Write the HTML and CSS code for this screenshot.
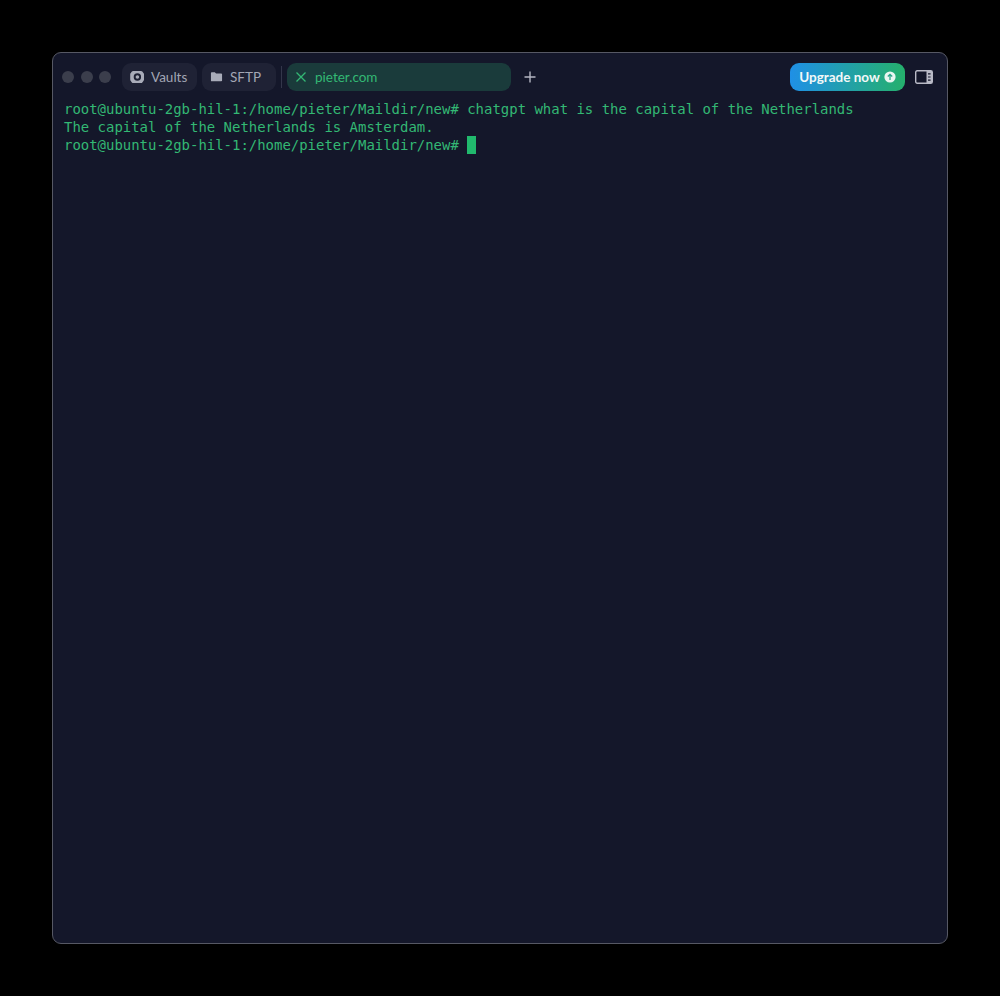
FILE: index.html
```html
<!DOCTYPE html>
<html lang="en">
<head>
<meta charset="utf-8">
<title>Termius</title>
<link rel="stylesheet" href="styles.css">
</head>
<body>
<main class="window">
  <header class="toolbar">
    <div class="lights"><span class="light"></span><span class="light"></span><span class="light"></span></div>
    <div class="tab tab-vaults">
      <svg class="icon" viewBox="0 0 14 14" width="14" height="14"><path fill="#a9acb9" fill-rule="evenodd" d="M3.2 1h7.8c.6 0 1 .2 1.3.6l1.1 1.5c.4.4.6.8.6 1.3v5.2c0 .5-.2.9-.6 1.3l-1.1 1.5c-.3.4-.7.6-1.3.6H3.2c-.6 0-1-.2-1.3-.6L.8 10.900c-.4-.4-.6-.8-.6-1.300V4.400c0-.5.2-.9.6-1.300l1.100-1.500C2.200 1.200 2.600 1 3.200 1zM7.400 3.300a3.700 3.700 0 1 0 0 7.400 3.700 3.700 0 0 0 0-7.400zM7.400 5.200a1.800 1.800 0 1 1 0 3.600 1.800 1.800 0 0 1 0-3.600z"/></svg>
      <span>Vaults</span>
    </div>
    <div class="tab tab-sftp">
      <svg class="icon" viewBox="0 0 14 14" width="13" height="13"><path fill="#a9acb9" d="M1 3.200c0-.5.4-.9.9-.9h3.300l1.300 1.400h5.600c.5 0 .9.4.9.9v6.600c0 .5-.4.9-.9.9H1.900a.9.9 0 0 1-.9-.9z"/></svg>
      <span>SFTP</span>
    </div>
    <div class="divider"></div>
    <div class="tab tab-active">
      <svg class="close" viewBox="0 0 12 12" width="12" height="12"><path d="M1.500 1.500l9 9M10.500 1.500l-9 9" stroke="#33b874" stroke-width="1.300" fill="none"/></svg>
      <span>pieter.com</span>
    </div>
    <svg class="plus" viewBox="0 0 12 12" width="12" height="12"><path d="M6 .5v11M.5 6h11" stroke="#b4b6c2" stroke-width="1.400" fill="none"/></svg>
    <div class="upgrade">
      <span>Upgrade now</span>
      <svg viewBox="0 0 12 12" width="12" height="12"><circle cx="6" cy="6" r="5.600" fill="#e9f6f1"/><path d="M6 9V3.400M3.800 5.500L6 3.300l2.200 2.200" stroke="#2aa58a" stroke-width="1.300" fill="none"/></svg>
    </div>
    <svg class="sidebar" viewBox="0 0 18 14" width="18" height="14"><rect x=".7" y=".7" width="16.600" height="12.600" rx="1.500" fill="none" stroke="#b9bac6" stroke-width="1.400"/><path d="M11.500 1h5.500v12h-5.500z" fill="#b9bac6"/><path d="M13 3.800h2.600M13 7h2.600M13 10.200h2.600" stroke="#14172a" stroke-width="1.200"/></svg>
  </header>
  <pre class="terminal">root@ubuntu-2gb-hil-1:/home/pieter/Maildir/new# chatgpt what is the capital of the Netherlands
The capital of the Netherlands is Amsterdam.
root@ubuntu-2gb-hil-1:/home/pieter/Maildir/new# <span class="cursor"></span></pre>
</main>
</body>
</html>
```
FILE: styles.css
```css
* { box-sizing: border-box; }
html, body { margin: 0; height: 100%; }
body {
  background: #000;
  padding: 52px;
  font-family: "Lato", "Liberation Sans", sans-serif;
}
.window {
  width: 896px;
  height: 892px;
  background: #14172a;
  border: 1px solid #565864;
  border-radius: 9px;
  overflow: hidden;
}
.toolbar {
  display: flex;
  align-items: center;
  height: 47px;
  padding: 10px 14px 10px 9px;
}
.lights { display: flex; gap: 6.5px; margin-right: 11px; }
.light {
  width: 12px;
  height: 12px;
  border-radius: 50%;
  background: #3b3e4c;
}
.tab {
  height: 28px;
  border-radius: 9px;
  display: flex;
  align-items: center;
  background: #1f2235;
  color: #a3a6b4;
  font-size: 13.5px;
}
.tab-vaults { width: 75px; padding-left: 8px; gap: 7px; margin-right: 5px; }
.tab-sftp { width: 74px; padding-left: 8px; gap: 7px; }
.divider { width: 1px; height: 22px; background: #33364a; margin: 0 5px; }
.tab-active {
  width: 224px;
  padding-left: 8px;
  gap: 8px;
  background: #1a3b3b;
  color: #33b874;
}
.plus { margin-left: 13px; }
.upgrade {
  margin-left: auto;
  width: 115px;
  height: 28px;
  border-radius: 9px;
  background: linear-gradient(90deg, #1f90e6, #25b06c);
  color: #f2f8f8;
  font-size: 13.5px;
  font-weight: 700;
  display: flex;
  align-items: center;
  justify-content: center;
  gap: 4px;
}
.sidebar { margin-left: 10px; }
.terminal {
  margin: 0;
  padding: 0 0 0 11px;
  color: #33b874;
  font-family: "DejaVu Sans Mono", "Liberation Mono", monospace;
  font-size: 13.96px;
  line-height: 18px;
}
.cursor {
  display: inline-block;
  width: 9px;
  height: 18px;
  background: #21b96d;
  vertical-align: top;
}
```
